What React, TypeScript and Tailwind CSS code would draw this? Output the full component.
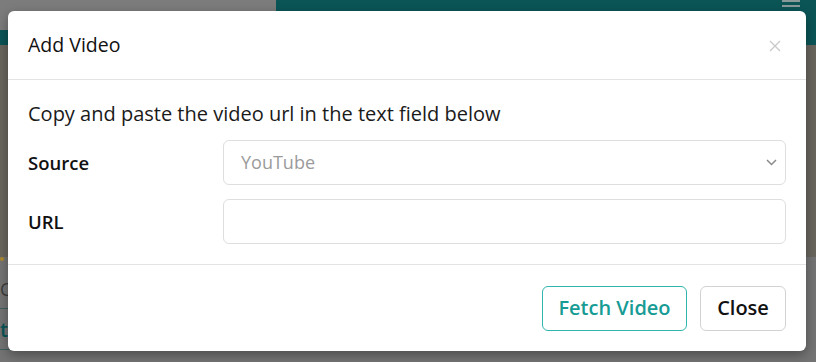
import React from "react";

export default function App() {
  return (
    <div
      className="relative w-[816px] h-[362px] overflow-hidden bg-[#6f6f6f]"
      style={{ fontFamily: '"Open Sans", "Noto Sans", sans-serif' }}
    >
      {/* dimmed background page */}
      <div className="flex flex-col h-full">
        <div className="relative h-[45px] bg-[#0b5557] flex items-start">
          <div className="w-[276px] h-[30px] bg-[#7c7c7c]" />
          <div className="absolute right-[16px] top-0 flex flex-col gap-[3px]">
            <div className="w-[18px] h-[2px] bg-[#8a9a9a]" />
            <div className="w-[18px] h-[2px] bg-[#8a9a9a]" />
          </div>
        </div>
        <div className="h-[212px] bg-[#69665e]" />
        <div className="flex-1 bg-[#747474] relative">
          <div className="absolute left-0 top-0 w-[4px] h-[4px] rounded-full bg-[#b08a2a]" />
          <div className="absolute left-0 top-[22px] text-[18px] leading-[20px] text-[#3c3c3c]">C</div>
          <div className="absolute left-0 top-[51px] w-[10px] h-[1px] bg-[#3f5f5f]" />
          <div className="absolute left-0 top-[62px] text-[20px] leading-[22px] font-semibold text-[#0b5557]">t</div>
          <div className="absolute left-0 top-[92px] w-[10px] h-[1px] bg-[#3f5f5f]" />
        </div>
      </div>

      {/* modal */}
      <div className="absolute left-[8px] top-[11px] w-[798px] h-[340px] rounded-[6px] bg-white shadow-[0_4px_12px_rgba(0,0,0,0.35)] flex flex-col">
        <div className="h-[69px] shrink-0 flex items-center justify-between pl-5 pr-[25px] border-b border-[#e3e3e3]">
          <span className="text-[19.5px] text-[#111] leading-none">Add Video</span>
          <svg width="12" height="12" viewBox="0 0 12 12" className="mt-[1px]">
            <path d="M1 1 L11 11 M11 1 L1 11" stroke="#c9c9c9" strokeWidth="1.3" fill="none" />
          </svg>
        </div>

        <div className="flex-1 flex flex-col px-5 pt-[20px]">
          <p className="text-[20px] leading-[27px] text-[#1a1a1a] mb-[13px]">
            Copy and paste the video url in the text field below
          </p>
          <div className="flex flex-col gap-[14px]">
            <div className="flex items-center">
              <div className="w-[195px] text-[18.5px] font-semibold text-[#111]">Source</div>
              <div className="flex-1 h-[45px] rounded-[6px] border border-[#dedede] flex items-center justify-between pl-[17px] pr-[8px]">
                <span className="text-[18px] text-[#9b9b9b]">YouTube</span>
                <svg width="11" height="7" viewBox="0 0 11 7">
                  <path d="M1 1 L5.5 5.5 L10 1" stroke="#8a8a8a" strokeWidth="1.5" fill="none" />
                </svg>
              </div>
            </div>
            <div className="flex items-center">
              <div className="w-[195px] text-[18.5px] font-semibold text-[#111]">URL</div>
              <div className="flex-1 h-[45px] rounded-[6px] border border-[#dedede]" />
            </div>
          </div>
        </div>

        <div className="h-[87px] shrink-0 border-t border-[#e3e3e3] flex items-center justify-end gap-[13px] pr-5">
          <button className="w-[145px] h-[45px] rounded-[6px] border border-[#30b6ae] text-[#179c95] text-[20px] font-semibold bg-white">
            Fetch Video
          </button>
          <button className="w-[86px] h-[45px] rounded-[6px] border border-[#d2d2d2] text-[#111] text-[20px] font-semibold bg-white">
            Close
          </button>
        </div>
      </div>
    </div>
  );
}
